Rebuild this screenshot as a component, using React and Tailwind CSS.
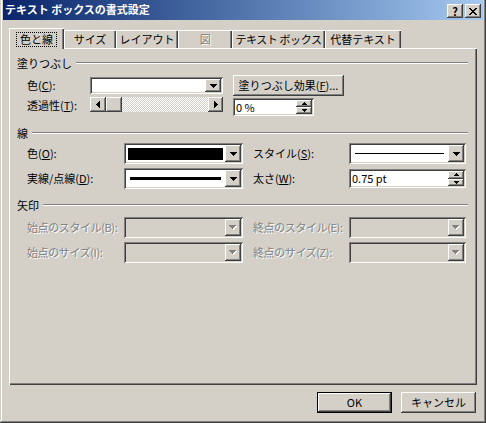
import React from 'react';

const RAISED =
  'shadow-[inset_-1px_-1px_#404040,inset_1px_1px_#ffffff,inset_-2px_-2px_#808080,inset_2px_2px_#d4d0c8]';
const SUNKEN =
  'shadow-[inset_1px_1px_#808080,inset_-1px_-1px_#ffffff,inset_2px_2px_#404040,inset_-2px_-2px_#d4d0c8]';
const DIS = 'text-[#808080] [text-shadow:1px_1px_0_#ffffff] tracking-[-0.4px]';

const CLOSE_ROWS = ['11000011', '01100110', '00111100', '00011000', '00111100', '01100110', '11000011'];

function CloseGlyph() {
  return (
    <svg width="8" height="7" shapeRendering="crispEdges">
      {CLOSE_ROWS.map((row, y) =>
        row.split('').map((c, x) => (c === '1' ? <rect key={`${x}-${y}`} x={x} y={y} width="1" height="1" fill="#000" /> : null))
      )}
    </svg>
  );
}

function Down({ color = '#000' }) {
  return (
    <svg width="7" height="4" shapeRendering="crispEdges">
      <rect x="0" y="0" width="7" height="1" fill={color} />
      <rect x="1" y="1" width="5" height="1" fill={color} />
      <rect x="2" y="2" width="3" height="1" fill={color} />
      <rect x="3" y="3" width="1" height="1" fill={color} />
    </svg>
  );
}

function DisabledDown() {
  return (
    <svg width="8" height="5" shapeRendering="crispEdges">
      <g fill="#ffffff" transform="translate(1 1)">
        <rect x="0" y="0" width="7" height="1" />
        <rect x="1" y="1" width="5" height="1" />
        <rect x="2" y="2" width="3" height="1" />
        <rect x="3" y="3" width="1" height="1" />
      </g>
      <g fill="#808080">
        <rect x="0" y="0" width="7" height="1" />
        <rect x="1" y="1" width="5" height="1" />
        <rect x="2" y="2" width="3" height="1" />
        <rect x="3" y="3" width="1" height="1" />
      </g>
    </svg>
  );
}

function SmallTri({ up }) {
  return (
    <svg width="5" height="3" shapeRendering="crispEdges">
      {up ? (
        <>
          <rect x="2" y="0" width="1" height="1" fill="#000" />
          <rect x="1" y="1" width="3" height="1" fill="#000" />
          <rect x="0" y="2" width="5" height="1" fill="#000" />
        </>
      ) : (
        <>
          <rect x="0" y="0" width="5" height="1" fill="#000" />
          <rect x="1" y="1" width="3" height="1" fill="#000" />
          <rect x="2" y="2" width="1" height="1" fill="#000" />
        </>
      )}
    </svg>
  );
}

function SideTri({ left }) {
  return (
    <svg width="4" height="7" shapeRendering="crispEdges">
      {left ? (
        <>
          <rect x="0" y="3" width="1" height="1" fill="#000" />
          <rect x="1" y="2" width="1" height="3" fill="#000" />
          <rect x="2" y="1" width="1" height="5" fill="#000" />
          <rect x="3" y="0" width="1" height="7" fill="#000" />
        </>
      ) : (
        <>
          <rect x="0" y="0" width="1" height="7" fill="#000" />
          <rect x="1" y="1" width="1" height="5" fill="#000" />
          <rect x="2" y="2" width="1" height="3" fill="#000" />
          <rect x="3" y="3" width="1" height="1" fill="#000" />
        </>
      )}
    </svg>
  );
}

function Combo({ className, disabled, children }) {
  return (
    <div className={`flex shrink-0 p-[2px] ${SUNKEN} ${disabled ? 'bg-[#d4d0c8]' : 'bg-white'} ${className}`}>
      <div className="flex flex-1 items-center px-[2px]">{children}</div>
      <div className={`flex w-[16px] items-center justify-center bg-[#d4d0c8] ${RAISED}`}>
        {disabled ? <DisabledDown /> : <Down />}
      </div>
    </div>
  );
}

function Spin({ className, value }) {
  return (
    <div className={`flex shrink-0 bg-white p-[2px] ${SUNKEN} ${className}`}>
      <div className="flex flex-1 items-center pl-[1px]">{value}</div>
      <div className="flex w-[16px] flex-col">
        <div className={`flex flex-1 items-center justify-center bg-[#d4d0c8] ${RAISED}`}>
          <SmallTri up />
        </div>
        <div className={`flex flex-1 items-center justify-center bg-[#d4d0c8] ${RAISED}`}>
          <SmallTri />
        </div>
      </div>
    </div>
  );
}

function GroupHeader({ children, className }) {
  return (
    <div className={`flex h-[14px] items-center ${className}`}>
      <span>{children}</span>
      <div className="ml-[4px] h-0 flex-1 border-t border-b border-t-[#808080] border-b-white" />
    </div>
  );
}

function Tab({ className, selected, children }) {
  if (selected) {
    return (
      <div
        className={`relative z-10 -mb-[1px] flex h-[21px] items-start justify-center bg-[#d4d0c8] pt-[4px] shadow-[inset_1px_1px_#ffffff,inset_-1px_0_#404040,inset_-2px_0_#808080] ${className}`}
      >
        {children}
      </div>
    );
  }
  return (
    <div
      className={`flex h-[18px] items-center justify-center bg-[#d4d0c8] shadow-[inset_1px_1px_#ffffff,inset_-1px_0_#404040,inset_-2px_0_#808080] ${className}`}
    >
      {children}
    </div>
  );
}

function PushButton({ children, isDefault }) {
  return (
    <div
      className={`flex h-[21px] w-[75px] items-center justify-center bg-[#d4d0c8] ${
        isDefault
          ? 'shadow-[inset_0_0_0_1px_#000000,inset_-2px_-2px_#404040,inset_2px_2px_#ffffff,inset_-3px_-3px_#808080]'
          : 'shadow-[inset_-1px_-1px_#404040,inset_1px_1px_#ffffff,inset_-2px_-2px_#808080]'
      }`}
    >
      {children}
    </div>
  );
}

export default function App() {
  return (
    <div className="flex h-[423px] w-[486px] flex-col overflow-hidden whitespace-nowrap bg-[#d4d0c8] px-[3px] font-['Noto_Sans_CJK_JP','Noto_Sans',sans-serif] text-[11px] leading-none text-black shadow-[inset_-1px_-1px_#404040,inset_1px_0_#d4d0c8,inset_-2px_-2px_#808080,inset_2px_0_#ffffff]">
      {/* title bar */}
      <div className="flex h-[20px] items-start bg-gradient-to-r from-[#0a246a] to-[#a6caf0] pl-[2px] pr-[2px]">
        <span className="mt-[4px] text-[11px] font-bold text-white">テキスト ボックスの書式設定</span>
        <div className="ml-auto mt-[4px] flex gap-[2px]">
          <div className={`flex h-[14px] w-[16px] items-center justify-center bg-[#d4d0c8] text-[11px] font-bold ${RAISED}`}>
            ?
          </div>
          <div className={`flex h-[14px] w-[16px] items-center justify-center bg-[#d4d0c8] ${RAISED}`}>
            <CloseGlyph />
          </div>
        </div>
      </div>

      <div className="mt-[8px] px-[6px]">
        {/* tabs */}
        <div className="flex h-[20px] items-end">
          <Tab selected className="w-[55px]">
            <span className="border border-dotted border-black px-[3px] py-[1px]">色と線</span>
          </Tab>
          <Tab className="w-[52px]">サイズ</Tab>
          <Tab className="w-[62px]">レイアウト</Tab>
          <Tab className="w-[54px]">
            <span className={DIS}>図</span>
          </Tab>
          <Tab className="w-[93px]">
            <span className="tracking-[-0.4px]">テキスト ボックス</span>
          </Tab>
          <Tab className="w-[76px]">代替テキスト</Tab>
        </div>

        {/* panel */}
        <div className="flex h-[337px] flex-col bg-[#d4d0c8] pl-[8px] pr-[9px] pt-[8px] shadow-[inset_1px_1px_#ffffff,inset_-1px_-1px_#404040,inset_-2px_-2px_#808080]">
          <GroupHeader>塗りつぶし</GroupHeader>

          <div className="mt-[5px] flex h-[21px] items-center pl-[10px]">
            <span className="w-[63px] shrink-0">
              色(<u>C</u>):
            </span>
            <Combo className="h-[17px] w-[133px]" />
            <div className="ml-[10px] flex h-[21px] w-[111px] shrink-0 items-center justify-center bg-[#d4d0c8] shadow-[inset_-1px_-1px_#404040,inset_1px_1px_#ffffff,inset_-2px_-2px_#808080]">
              塗りつぶし効果(<u>F</u>)...
            </div>
          </div>

          <div className="mt-[1px] flex h-[19px] items-start pl-[10px]">
            <span className="flex h-[16px] w-[63px] shrink-0 items-center">
              透過性(<u>T</u>):
            </span>
            <div className="flex h-[15px] w-[133px] shrink-0">
              <div className={`flex w-[16px] items-center justify-center bg-[#d4d0c8] ${RAISED}`}>
                <SideTri left />
              </div>
              <div className={`w-[16px] bg-[#d4d0c8] ${RAISED}`} />
              <div className="flex-1 bg-[repeating-conic-gradient(#ffffff_0%_25%,#d4d0c8_0%_50%)] bg-[length:2px_2px]" />
              <div className={`flex w-[15px] items-center justify-center bg-[#d4d0c8] ${RAISED}`}>
                <SideTri />
              </div>
            </div>
            <Spin className="ml-[10px] mt-[1px] h-[18px] w-[81px]" value="0 %" />
          </div>

          <GroupHeader className="mt-[10px]">線</GroupHeader>

          <div className="mt-[3px] flex h-[21px] items-center pl-[10px]">
            <span className="w-[97px] shrink-0">
              色(<u>O</u>):
            </span>
            <Combo className="h-[21px] w-[119px]">
              <div className="h-[12px] w-full bg-black" />
            </Combo>
            <span className="ml-[10px] w-[96px] shrink-0">
              スタイル(<u>S</u>):
            </span>
            <Combo className="h-[21px] w-[117px]">
              <div className="mx-[2px] h-[1px] w-full bg-black" />
            </Combo>
          </div>

          <div className="mt-[4px] flex h-[21px] items-center pl-[10px]">
            <span className="w-[97px] shrink-0">
              実線/点線(<u>D</u>):
            </span>
            <Combo className="h-[21px] w-[119px]">
              <div className="mx-[2px] h-[3px] w-full bg-black" />
            </Combo>
            <span className="ml-[10px] w-[96px] shrink-0">
              太さ(<u>W</u>):
            </span>
            <Spin className="h-[19px] w-[117px]" value="0.75 pt" />
          </div>

          <GroupHeader className="mt-[9px]">矢印</GroupHeader>

          <div className="mt-[5px] flex h-[21px] items-center pl-[10px]">
            <span className={`w-[97px] shrink-0 ${DIS}`}>始点のスタイル(B):</span>
            <Combo disabled className="h-[21px] w-[119px]" />
            <span className={`ml-[10px] w-[96px] shrink-0 ${DIS}`}>終点のスタイル(E):</span>
            <Combo disabled className="h-[21px] w-[117px]" />
          </div>

          <div className="mt-[4px] flex h-[21px] items-center pl-[10px]">
            <span className={`w-[97px] shrink-0 ${DIS}`}>始点のサイズ(I):</span>
            <Combo disabled className="h-[21px] w-[119px]" />
            <span className={`ml-[10px] w-[96px] shrink-0 ${DIS}`}>終点のサイズ(Z):</span>
            <Combo disabled className="h-[21px] w-[117px]" />
          </div>
        </div>
      </div>

      {/* dialog buttons */}
      <div className="mt-[7px] flex justify-end gap-[9px] pr-[7px]">
        <PushButton isDefault>OK</PushButton>
        <PushButton>キャンセル</PushButton>
      </div>
    </div>
  );
}
